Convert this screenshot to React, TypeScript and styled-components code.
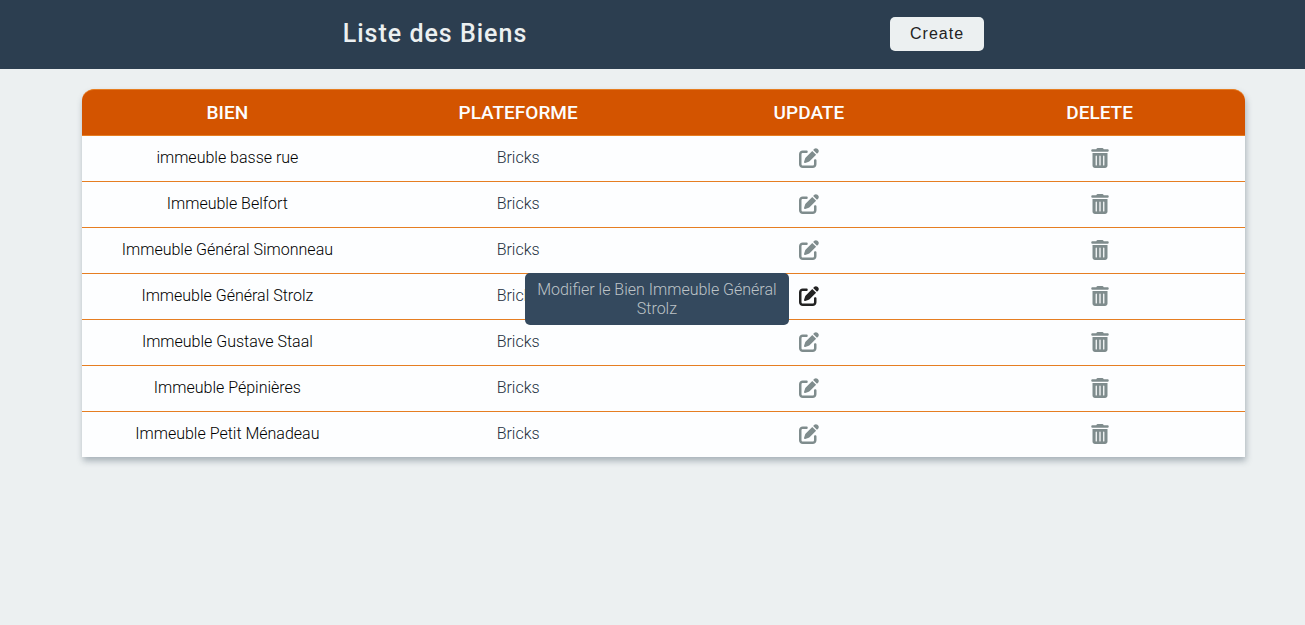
import React from "react";
import styled, { createGlobalStyle } from "styled-components";
import { FaPenToSquare, FaTrashCan } from "react-icons/fa6";

const GlobalStyle = createGlobalStyle`
  *, *::before, *::after { box-sizing: border-box; }
  body {
    margin: 0;
    background: #ecf0f1;
    font-family: Roboto, "Liberation Sans", sans-serif;
    font-weight: 300;
    color: #000;
  }
`;

const Header = styled.header`
  display: grid;
  grid-template-columns: 2fr 1fr;
  align-items: center;
  padding: 17px 0 18px;
  background: #2c3e50;
`;

const Title = styled.h1`
  margin: 0;
  text-align: center;
  font-size: 25px;
  line-height: 30px;
  font-weight: 500;
  letter-spacing: 1px;
  color: #ecf0f1;
`;

const CreateButton = styled.button`
  justify-self: start;
  margin-left: 20px;
  padding: 0 20px;
  height: 34px;
  border: 0;
  border-radius: 5px;
  background: #ecf0f1;
  color: #222;
  font: 400 16px "Liberation Sans", sans-serif;
  letter-spacing: 1px;
  cursor: pointer;
`;

const Main = styled.main`
  padding: 20px 60px 20px 82px;
`;

const Table = styled.table`
  width: 100%;
  table-layout: fixed;
  border-collapse: separate;
  border-spacing: 0;
  border-radius: 12px 12px 0 0;
  background: #fdfeff;
  box-shadow: 1px 4px 6px rgba(44, 62, 80, 0.35);
`;

const HeadCell = styled.th`
  height: 47px;
  padding: 0;
  background: #d35400;
  border-top: 1px solid #e67e22;
  border-bottom: 1px solid #e67e22;
  color: #fdfeff;
  font-size: 19px;
  line-height: 21px;
  font-weight: 500;
  text-transform: uppercase;
  &:first-child { border-top-left-radius: 12px; }
  &:last-child { border-top-right-radius: 12px; }
`;

const Row = styled.tr`
  & > td { height: 46px; border-bottom: 1px solid #e67e22; }
  &:last-child > td { height: 45px; border-bottom: 0; }
`;

const Cell = styled.td<{ $soft?: boolean }>`
  padding: 0 0 2px;
  text-align: center;
  font-size: 16px;
  line-height: 19px;
  color: ${(p) => (p.$soft ? "#222f3d" : "#000")};
`;

const IconButton = styled.button<{ $active?: boolean }>`
  position: relative;
  display: inline-flex;
  padding: 0;
  border: 0;
  background: none;
  vertical-align: middle;
  color: ${(p) => (p.$active ? "#222" : "#7f8c8d")};
  font: inherit;
  cursor: pointer;
`;

const Tooltip = styled.span`
  position: absolute;
  right: 100%;
  top: 50%;
  transform: translateY(-50%);
  z-index: 1;
  width: 264px;
  margin: 3px 10px 0 0;
  padding: 7px 10px;
  border-radius: 5px;
  background: #34495e;
  color: #bdc3c7;
  text-align: center;
`;

const biens = [
  "immeuble basse rue",
  "Immeuble Belfort",
  "Immeuble Général Simonneau",
  "Immeuble Général Strolz",
  "Immeuble Gustave Staal",
  "Immeuble Pépinières",
  "Immeuble Petit Ménadeau",
];

const hovered = "Immeuble Général Strolz";

export default function App() {
  return (
    <>
      <GlobalStyle />
      <Header>
        <Title>Liste des Biens</Title>
        <CreateButton type="button">Create</CreateButton>
      </Header>
      <Main>
        <Table>
          <thead>
            <tr>
              <HeadCell scope="col">Bien</HeadCell>
              <HeadCell scope="col">Plateforme</HeadCell>
              <HeadCell scope="col">Update</HeadCell>
              <HeadCell scope="col">Delete</HeadCell>
            </tr>
          </thead>
          <tbody>
            {biens.map((bien) => (
              <Row key={bien}>
                <Cell>{bien}</Cell>
                <Cell $soft>Bricks</Cell>
                <Cell>
                  <IconButton type="button" aria-label={`Modifier ${bien}`} $active={bien === hovered}>
                    <FaPenToSquare size={20} aria-hidden="true" />
                    {bien === hovered && <Tooltip role="tooltip">Modifier le Bien {bien}</Tooltip>}
                  </IconButton>
                </Cell>
                <Cell>
                  <IconButton type="button" aria-label={`Supprimer ${bien}`}>
                    <FaTrashCan size={20} aria-hidden="true" />
                  </IconButton>
                </Cell>
              </Row>
            ))}
          </tbody>
        </Table>
      </Main>
    </>
  );
}
